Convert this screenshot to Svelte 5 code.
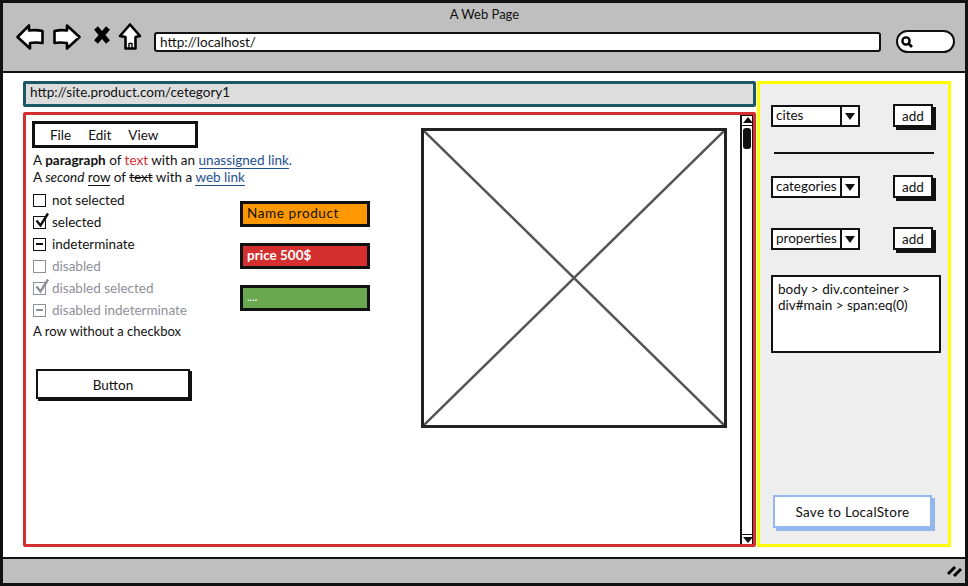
<script>
	const checks = [
		{ label: 'not selected', kind: 'empty' },
		{ label: 'selected', kind: 'checked' },
		{ label: 'indeterminate', kind: 'mixed' },
		{ label: 'disabled', kind: 'empty', disabled: true },
		{ label: 'disabled selected', kind: 'checked', disabled: true },
		{ label: 'disabled indeterminate', kind: 'mixed', disabled: true }
	];
	const fields = ['cites', 'categories', 'properties'];
</script>

<div class="window">
	<header class="chrome">
		<div class="title">A Web Page</div>
		<div class="toolbar">
			<svg class="nav" width="128" height="32" viewBox="16 25 128 32" fill="#fff" stroke="#000" stroke-width="2.6" stroke-linejoin="round">
				<path d="M17.5 37 L29 25.5 L29 30.5 Q36 29.5 42.5 31 L42.5 43 Q36 42 30 43 L30 48.5 Z" />
				<path d="M54.5 31 Q61 29.5 67 30.5 L67 25.5 L79.5 37 L67 48.5 L67 43 Q60 42 54.5 43 Z" />
				<path d="M96 28 L108 42 M108 28 L96 42" fill="none" stroke-width="5" />
				<path d="M130 24.5 L140 36 L135.5 37 L135.5 48.5 L125.5 48.5 L125.5 37 L120 36 Z" />
				<path d="M129 48 L129 43.5 L132 43.5 L132 48" fill="none" stroke-width="1.4" />
			</svg>
			<div class="address">http://localhost/</div>
			<div class="search">
				<svg width="14" height="14" viewBox="0 0 14 14" fill="none" stroke="#000">
					<circle cx="6" cy="6" r="3.6" stroke-width="2.4" />
					<path d="M8.5 8.5 L12 12" stroke-width="2.6" />
				</svg>
			</div>
		</div>
	</header>

	<main class="content">
		<div class="left">
			<div class="url">http://site.product.com/cetegory1</div>
			<section class="page">
				<div class="body">
					<div class="col-main">
						<nav class="menu"><span>File</span><span>Edit</span><span>View</span></nav>
						<p class="para">
							A <b>paragraph</b> of <span class="red">text</span> with an <a href="#a">unassigned link</a><span class="blue">.</span><br />
							A <i>second</i> <u>row</u> of <s>text</s> with a <a href="#b">web link</a>
						</p>
						<div class="row-group">
							<ul class="checks">
								{#each checks as c}
									<li class:disabled={c.disabled}>
										<span class="box">
											{#if c.kind === 'checked'}
												<svg width="18" height="18" viewBox="0 0 18 18" fill="none"><path d="M3.5 8.5 L7.5 13.5 L15 1.5" stroke="currentColor" stroke-width="2.4" /></svg>
											{:else if c.kind === 'mixed'}
												<span class="dash"></span>
											{/if}
										</span>
										{c.label}
									</li>
								{/each}
								<li class="plain">A row without a checkbox</li>
							</ul>
							<div class="tags">
								<div class="tag orange">Name product</div>
								<div class="tag redbg">price 500$</div>
								<div class="tag green">....</div>
							</div>
						</div>
						<button class="btn">Button</button>
					</div>
					<div class="placeholder">
						<svg width="100%" height="100%" viewBox="0 0 100 100" preserveAspectRatio="none">
							<path d="M0 0 L100 100 M100 0 L0 100" stroke="#555" stroke-width="2.5" vector-effect="non-scaling-stroke" />
						</svg>
					</div>
				</div>
				<div class="scrollbar">
					<span class="arrow up"></span>
					<span class="thumb"></span>
					<span class="track"></span>
					<span class="arrow down"></span>
				</div>
			</section>
		</div>

		<aside class="panel">
			{#each fields as f, i}
				<div class="field">
					<div class="select"><span class="val">{f}</span><span class="drop"><span class="tri"></span></span></div>
					<button class="add">add</button>
				</div>
				{#if i === 0}<hr class="rule" />{/if}
			{/each}
			<div class="selector">body &gt; div.conteiner &gt; div#main &gt; span:eq(0)</div>
			<button class="save">Save to LocalStore</button>
		</aside>
	</main>

	<footer class="status">
		<svg width="16" height="14" viewBox="0 0 16 14" stroke="#000" stroke-width="3"><path d="M1 10 L8 3 M7 12 L14 5" /></svg>
	</footer>
</div>

<style>
	:global(body) {
		margin: 0;
		background: #fff;
	}

	.window {
		box-sizing: border-box;
		width: 968px;
		height: 586px;
		border: 3px solid #111;
		display: flex;
		flex-direction: column;
		font-family: Lato, "Liberation Sans", sans-serif;
		font-size: 13.5px;
		color: #111;
		overflow: hidden;
	}

	.chrome {
		height: 68px;
		flex: none;
		background: #bfbfbf;
		border-bottom: 2px solid #111;
	}

	.title {
		text-align: center;
		font-size: 13px;
		line-height: 16px;
		padding-top: 3px;
		margin-right: -1px;
	}

	.toolbar {
		display: flex;
		align-items: center;
		padding: 3px 0 0 13px;
	}

	.nav {
		flex: none;
		overflow: visible;
	}

	.address {
		box-sizing: border-box;
		width: 727px;
		height: 20px;
		margin-left: 10px;
		margin-top: 1px;
		padding-left: 4px;
		background: #fff;
		border: 2px solid #111;
		border-radius: 3px;
		line-height: 16px;
	}

	.search {
		box-sizing: border-box;
		width: 59px;
		height: 23px;
		margin-left: 15px;
		padding: 3px 0 0 2px;
		background: #fff;
		border: 2px solid #111;
		border-radius: 12px;
	}

	.search svg {
		display: block;
	}

	.content {
		flex: 1;
		display: flex;
		gap: 1px;
		padding: 8px 14px 10px 20px;
		min-height: 0;
	}

	.left {
		width: 733px;
		flex: none;
		display: flex;
		flex-direction: column;
		gap: 5px;
	}

	.url {
		box-sizing: border-box;
		height: 26px;
		padding-left: 4px;
		background: #ddd;
		border: 3px solid #1c5864;
		border-radius: 2px;
		line-height: 17px;
	}

	.page {
		flex: 1;
		display: flex;
		border: 3px solid #d32f2f;
		border-radius: 2px;
		min-height: 0;
	}

	.body {
		flex: 1;
		display: flex;
		padding: 6px 0 0 7px;
	}

	.col-main {
		width: 388px;
	}

	.menu {
		box-sizing: border-box;
		width: 166px;
		height: 27px;
		display: flex;
		gap: 17px;
		padding: 0 0 0 15px;
		align-items: center;
		border: 3px solid #111;
		margin-left: -1px;
	}

	.para {
		margin: 4px 0 0 0;
		line-height: 17px;
	}

	.red {
		color: #d32f2f;
	}

	.blue,
	a {
		color: #1f4f8f;
	}

	a {
		text-decoration: none;
		border-bottom: 1px solid #1f4f8f;
	}

	u {
		text-decoration: none;
		border-bottom: 1px solid #111;
	}

	.row-group {
		display: flex;
		margin-top: 3px;
	}

	.checks {
		list-style: none;
		margin: 0;
		padding: 0;
		width: 207px;
	}

	.checks li {
		height: 22px;
		display: flex;
		align-items: center;
		gap: 6px;
	}

	.checks .plain {
		height: 20px;
		font-size: 13px;
	}

	.checks .disabled {
		color: #8f8f99;
	}

	.box {
		box-sizing: border-box;
		position: relative;
		width: 13px;
		height: 13px;
		border: 1.5px solid currentColor;
		display: flex;
		align-items: center;
		justify-content: center;
		flex: none;
	}

	.box svg {
		position: absolute;
		left: -1px;
		top: -5px;
	}

	.dash {
		width: 7px;
		height: 2px;
		background: currentColor;
	}

	.tags {
		display: flex;
		flex-direction: column;
		gap: 16px;
		padding-top: 12px;
	}

	.tag {
		box-sizing: border-box;
		width: 130px;
		height: 26px;
		padding-left: 4px;
		border: 3px solid #111;
		line-height: 18px;
	}

	.orange {
		background: #ff9800;
		letter-spacing: 0.6px;
	}

	.redbg {
		background: #d32f2f;
		color: #fff;
		font-weight: 700;
	}

	.green {
		background: #6aa84f;
		color: #fff;
		font-size: 11px;
	}

	.btn {
		display: block;
		box-sizing: border-box;
		width: 154px;
		height: 30px;
		margin: 28px 0 0 3px;
		padding: 1px 0 0;
		background: #fff;
		border: 2px solid #111;
		box-shadow: 2px 2px 0 #111;
		font: inherit;
		color: inherit;
	}

	.placeholder {
		box-sizing: border-box;
		width: 306px;
		height: 300px;
		margin-top: 7px;
		background: #fff;
		border: 3px solid #222;
	}

	.placeholder svg {
		display: block;
	}

	.scrollbar {
		box-sizing: border-box;
		width: 14px;
		margin-left: 13px;
		display: flex;
		flex-direction: column;
		align-items: center;
		border-left: 2px solid #111;
		border-right: 1px solid #111;
		border-top: 1px solid #111;
	}

	.arrow {
		box-sizing: border-box;
		width: 100%;
		height: 10px;
		flex: none;
		position: relative;
	}

	.up {
		border-bottom: 1px solid #111;
	}

	.down {
		border-top: 1px solid #111;
	}

	.arrow::after {
		content: '';
		position: absolute;
		left: 1px;
		border-left: 5px solid transparent;
		border-right: 5px solid transparent;
	}

	.up::after {
		top: 1px;
		border-bottom: 6px solid #111;
	}

	.down::after {
		top: 2px;
		border-top: 6px solid #111;
	}

	.thumb {
		width: 8px;
		height: 21px;
		margin-top: 2px;
		background: #111;
		border-radius: 3px;
		flex: none;
	}

	.track {
		flex: 1;
	}

	.panel {
		box-sizing: border-box;
		flex: 1;
		display: flex;
		flex-direction: column;
		padding: 20px 7px 16px 11px;
		background: #eee;
		border: 3px solid #ffff00;
	}

	.field {
		box-sizing: border-box;
		width: 162px;
		height: 26px;
		flex: none;
		display: flex;
		justify-content: space-between;
		align-items: flex-start;
	}

	.field + .field {
		margin-top: 26px;
	}

	.select {
		box-sizing: border-box;
		width: 89px;
		height: 22px;
		margin-top: 1px;
		display: flex;
		background: #fff;
		border: 2px solid #111;
	}

	.val {
		flex: 1;
		padding-left: 3px;
		line-height: 17px;
	}

	.drop {
		width: 16px;
		border-left: 2px solid #111;
		position: relative;
	}

	.tri {
		position: absolute;
		left: 3px;
		top: 6px;
		border-left: 5px solid transparent;
		border-right: 5px solid transparent;
		border-top: 7px solid #111;
	}

	.add {
		box-sizing: border-box;
		width: 40px;
		height: 23px;
		padding: 0;
		background: #fff;
		border: 2px solid #111;
		box-shadow: 3px 3px 0 #111;
		font: inherit;
		color: inherit;
	}

	.rule {
		width: 160px;
		height: 1.5px;
		margin: 22px 0 21.5px 3px;
		background: #111;
		border: 0;
		flex: none;
	}

	.selector {
		box-sizing: border-box;
		width: 170px;
		height: 78px;
		margin-top: 22px;
		padding: 4px 5px;
		background: #fff;
		border: 2px solid #111;
		line-height: 16px;
	}

	.save {
		box-sizing: border-box;
		width: 159px;
		height: 33px;
		margin: auto 0 0 2px;
		padding: 0;
		background: #fff;
		border: 2px solid #94b8ee;
		box-shadow: 3px 3px 0 #94b8ee;
		font: inherit;
		letter-spacing: 0.3px;
		color: inherit;
	}

	.status {
		box-sizing: border-box;
		height: 26px;
		flex: none;
		display: flex;
		align-items: center;
		justify-content: flex-end;
		padding-right: 2px;
		background: #bfbfbf;
		border-top: 2px solid #111;
	}
</style>
